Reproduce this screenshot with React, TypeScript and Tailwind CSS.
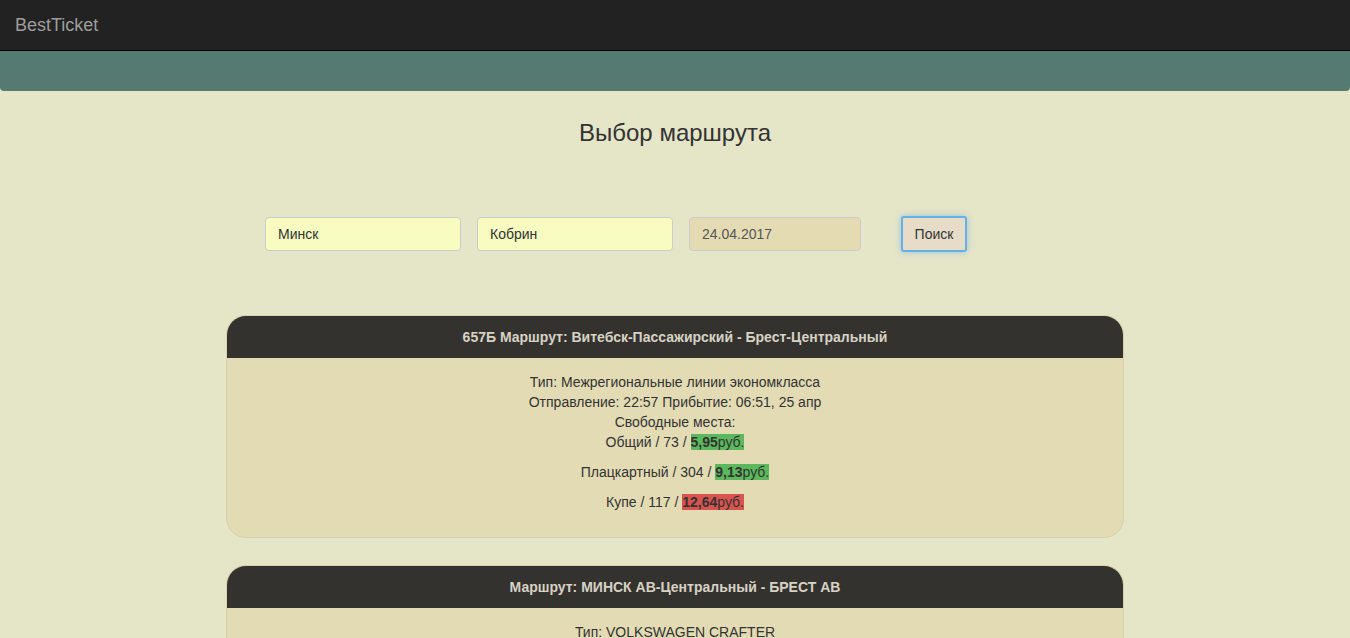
import React from "react";

type Seat = { name: string; count: number; price: string; cheap: boolean };

type Route = {
  title: string;
  type: string;
  times?: string;
  seats: Seat[];
};

const routes: Route[] = [
  {
    title: "657Б Маршрут: Витебск-Пассажирский - Брест-Центральный",
    type: "Межрегиональные линии экономкласса",
    times: "Отправление: 22:57 Прибытие: 06:51, 25 апр",
    seats: [
      { name: "Общий", count: 73, price: "5,95", cheap: true },
      { name: "Плацкартный", count: 304, price: "9,13", cheap: true },
      { name: "Купе", count: 117, price: "12,64", cheap: false },
    ],
  },
  {
    title: "Маршрут: МИНСК АВ-Центральный - БРЕСТ АВ",
    type: "VOLKSWAGEN CRAFTER",
    times: "Отправление: 06:20 Прибытие: 10:25",
    seats: [{ name: "Общий", count: 12, price: "14,50", cheap: true }],
  },
];

function RouteCard({ route }: { route: Route }) {
  return (
    <div className="w-[898px] mx-auto mb-[27px] rounded-[20px] border border-[#d8d0a8] bg-[#e3dbb3] overflow-hidden">
      <div className="h-[42px] bg-[#34322e] flex items-center justify-center text-[14px] font-bold text-[#d6d2c4]">
        {route.title}
      </div>
      <div className="pt-[14px] pb-[15px] text-center text-[14px] leading-5 text-[#333]">
        <div>Тип: {route.type}</div>
        {route.times && <div>{route.times}</div>}
        <div>Свободные места:</div>
        {route.seats.map((s) => (
          <p key={s.name} className="mb-[10px]">
            {s.name} / {s.count} /{" "}
            <span className={s.cheap ? "bg-[#5cb85c]" : "bg-[#d9534f]"}>
              <b>{s.price}</b>руб.
            </span>
          </p>
        ))}
      </div>
    </div>
  );
}

export default function App() {
  return (
    <div
      className="min-h-screen bg-[#e5e5c8] text-[#333]"
      style={{ fontFamily: '"Liberation Sans", Arial, sans-serif' }}
    >
      {/* navbar */}
      <div className="h-[51px] bg-[#222] border-b border-black flex items-center px-[15px]">
        <span className="text-[18px] text-[#9d9d9d]">BestTicket</span>
      </div>
      <div className="h-[40px] bg-[#557a72] rounded-b-[4px]" />

      <h1 className="text-center text-[24px] text-[#333] mt-[27px] leading-[30px]">Выбор маршрута</h1>

      {/* search form */}
      <div className="flex items-center mt-[68px] ml-[265px]">
        <input
          defaultValue="Минск"
          className="w-[196px] h-[34px] px-[12px] rounded-[4px] border border-[#ccc] bg-[#f8fcc0] text-[14px] text-[#333] outline-none"
        />
        <input
          defaultValue="Кобрин"
          className="ml-[16px] w-[196px] h-[34px] px-[12px] rounded-[4px] border border-[#ccc] bg-[#f8fcc0] text-[14px] text-[#333] outline-none"
        />
        <input
          defaultValue="24.04.2017"
          disabled
          className="ml-[16px] w-[172px] h-[34px] px-[12px] rounded-[4px] border border-[#ccc] bg-[#e5dbb3] text-[14px] text-[#555] outline-none"
        />
        <button className="ml-[40px] w-[66px] h-[36px] rounded-[3px] border-2 border-[#66afe9] bg-[#e7dcc8] text-[14px] text-[#333] shadow-[0_0_6px_rgba(102,175,233,0.6)]">
          Поиск
        </button>
      </div>

      <div className="mt-[63px]">
        {routes.map((r) => (
          <RouteCard key={r.title} route={r} />
        ))}
      </div>
    </div>
  );
}
